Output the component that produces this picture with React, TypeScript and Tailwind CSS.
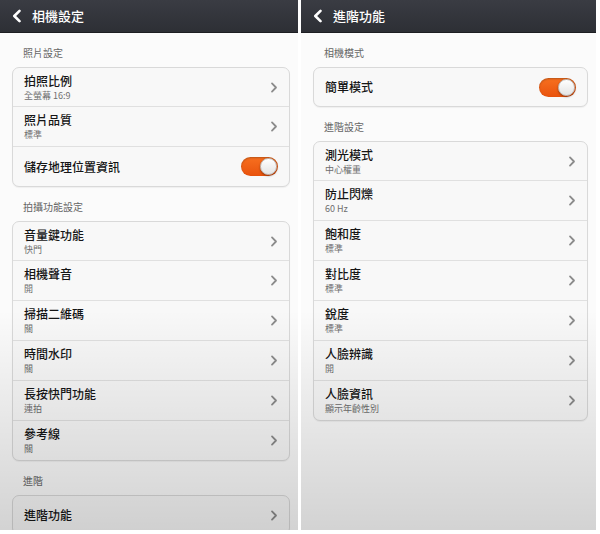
import React from "react";

type Row = { title: string; sub?: string; toggle?: boolean };

const FONT = { fontFamily: '"Noto Sans CJK TC", "Noto Sans", sans-serif' };

function Chevron() {
  return (
    <svg width="8" height="11" viewBox="0 0 8 11" className="shrink-0">
      <path d="M2 1.4 L6 5.5 L2 9.6" fill="none" stroke="#8c8c8c" strokeWidth="1.8" strokeLinecap="round" strokeLinejoin="round" />
    </svg>
  );
}

function Toggle() {
  return (
    <div className="relative w-[37px] h-[19px] rounded-full bg-gradient-to-b from-[#f7701f] to-[#e9520c] shadow-[inset_0_1px_2px_rgba(0,0,0,0.25)]">
      <div className="absolute right-[1px] top-[1px] w-[17px] h-[17px] rounded-full bg-gradient-to-b from-[#ffffff] to-[#e4e4e4] border border-[#bdbdbd] shadow-[0_1px_2px_rgba(0,0,0,0.4)]" />
    </div>
  );
}

function Card({ rows }: { rows: Row[] }) {
  return (
    <div className="ml-[12px] mr-[8px] rounded-[7px] border border-[#d9d9d9] bg-[#f8f8f8] shadow-[0_1px_1px_rgba(0,0,0,0.05)] overflow-hidden">
      {rows.map((r, i) => (
        <div
          key={i}
          className={`flex items-center justify-between pl-[11px] pr-[11px] ${i > 0 ? "h-[40px] border-t border-[#e0e0e0]" : "h-[38px]"}`}
        >
          <div className="flex flex-col">
            <div className="text-[12px] leading-[14px] font-medium text-[#151515]">{r.title}</div>
            {r.sub && <div className="text-[9px] leading-[11px] mt-[2px] text-[#6e6e6e]">{r.sub}</div>}
          </div>
          {r.toggle ? <Toggle /> : <Chevron />}
        </div>
      ))}
    </div>
  );
}

function Label({ text }: { text: string }) {
  return (
    <div className="h-[34px] pt-[14px] pl-[23px] text-[10px] leading-[12px] text-[#666666]">{text}</div>
  );
}

function Header({ title }: { title: string }) {
  return (
    <div className="h-[33px] shrink-0 flex items-center bg-gradient-to-b from-[#3a3c43] to-[#2d2f35] border-b border-[#1d1e22]">
      <svg width="12" height="14" viewBox="0 0 12 14" className="ml-[11px]">
        <path d="M8.5 1.8 L3.3 7 L8.5 12.2" fill="none" stroke="#ffffff" strokeWidth="2.6" strokeLinecap="round" strokeLinejoin="round" />
      </svg>
      <div className="ml-[9px] text-[13px] font-medium text-white">{title}</div>
    </div>
  );
}

function Panel({ title, children, width }: { title: string; children: React.ReactNode; width: string }) {
  return (
    <div className={`relative flex flex-col h-[530px] overflow-hidden bg-[#fbfbfb] ${width}`}>
      <Header title={title} />
      <div className="flex flex-col">{children}</div>
      <div className="pointer-events-none absolute left-0 right-0 bottom-0 h-[220px] bg-gradient-to-b from-[rgba(0,0,0,0)] to-[rgba(0,0,0,0.16)]" />
    </div>
  );
}

export default function App() {
  return (
    <div className="w-[600px] h-[534px] bg-white flex" style={FONT}>
      <Panel title="相機設定" width="w-[298px]">
        <Label text="照片設定" />
        <Card
          rows={[
            { title: "拍照比例", sub: "全螢幕 16:9" },
            { title: "照片品質", sub: "標準" },
            { title: "儲存地理位置資訊", toggle: true },
          ]}
        />
        <Label text="拍攝功能設定" />
        <Card
          rows={[
            { title: "音量鍵功能", sub: "快門" },
            { title: "相機聲音", sub: "開" },
            { title: "掃描二維碼", sub: "關" },
            { title: "時間水印", sub: "關" },
            { title: "長按快門功能", sub: "連拍" },
            { title: "參考線", sub: "關" },
          ]}
        />
        <Label text="進階" />
        <Card rows={[{ title: "進階功能" }]} />
      </Panel>
      <div className="w-[3px] shrink-0 bg-white" />
      <Panel title="進階功能" width="w-[295px]">
        <Label text="相機模式" />
        <Card rows={[{ title: "簡單模式", toggle: true }]} />
        <Label text="進階設定" />
        <Card
          rows={[
            { title: "測光模式", sub: "中心權重" },
            { title: "防止閃爍", sub: "60 Hz" },
            { title: "飽和度", sub: "標準" },
            { title: "對比度", sub: "標準" },
            { title: "銳度", sub: "標準" },
            { title: "人臉辨識", sub: "開" },
            { title: "人臉資訊", sub: "顯示年齡性別" },
          ]}
        />
      </Panel>
    </div>
  );
}
